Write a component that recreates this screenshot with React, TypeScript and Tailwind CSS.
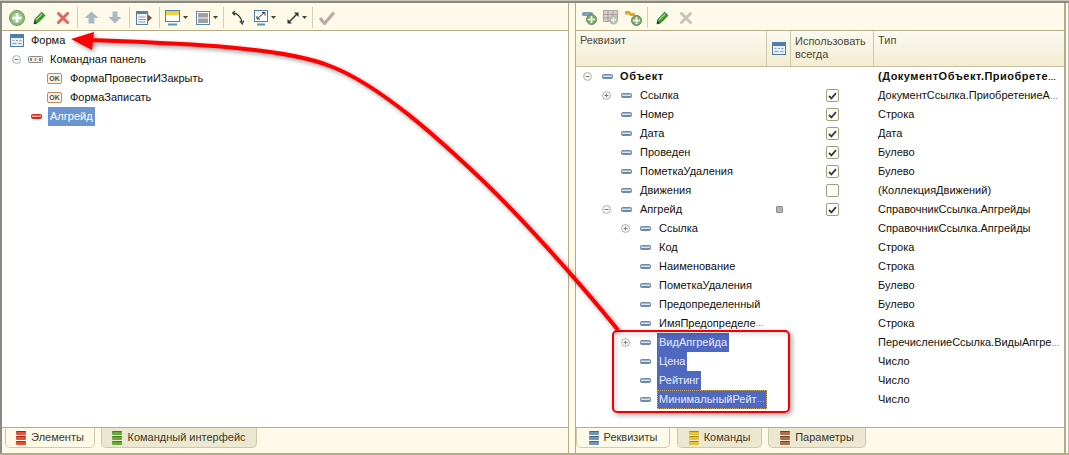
import type { ReactNode } from "react";

const font = "font-['Liberation_Sans',Arial,sans-serif]";

function Expander({ open }: { open: boolean }) {
  return (
    <svg width="9" height="9" viewBox="0 0 9 9" className="shrink-0">
      <circle cx="4.5" cy="4.5" r="3.9" fill="#fff" stroke="#a9a9a9" />
      <path d="M2.5 4.5h4" stroke="#777" />
      {!open && <path d="M4.5 2.5v4" stroke="#777" />}
    </svg>
  );
}

function FieldIcon({ red }: { red?: boolean }) {
  return (
    <svg width="11" height="5" viewBox="0 0 11 5" className="shrink-0">
      <rect x="0" y="0" width="11" height="5" rx="2" fill={red ? "#d8261c" : "#6d8aa8"} />
      <rect x="1" y="1.5" width="9" height="1.5" fill={red ? "#f8b0a0" : "#d7e2ec"} />
    </svg>
  );
}

function OkIcon() {
  return (
    <span className="flex h-[11px] w-[15px] shrink-0 items-center justify-center rounded-[2px] border border-[#c68a5a] bg-[#fdf3e2] text-[7px] leading-none font-bold text-[#5b4a3c]">
      OK
    </span>
  );
}

function FormIcon() {
  return (
    <svg width="14" height="13" viewBox="0 0 14 13" className="shrink-0">
      <rect x="0.5" y="0.5" width="13" height="12" fill="#e8eef4" stroke="#4f7ea6" />
      <rect x="1" y="1" width="12" height="3" fill="#4f7ea6" />
      <path d="M2.5 6.5h2M6 6.5h2M9.5 6.5h2M2.5 9.5h4M8 9.5h3.5" stroke="#8aa0b4" />
    </svg>
  );
}

function Check({ on }: { on: boolean }) {
  return (
    <span className="flex h-[13px] w-[13px] items-center justify-center rounded-[2px] border border-[#a69d78] bg-white">
      {on && (
        <svg width="9" height="8" viewBox="0 0 9 8">
          <path d="M1 4l2.4 2.4L8 1.2" fill="none" stroke="#3a3a3a" strokeWidth="1.8" />
        </svg>
      )}
    </span>
  );
}

function Caret() {
  return (
    <svg width="5" height="3" viewBox="0 0 5 3" className="ml-[3px] shrink-0">
      <path d="M0 0h5L2.5 3z" fill="#4a4320" />
    </svg>
  );
}

function Sep({ className }: { className: string }) {
  return <span className={`h-[21px] w-px shrink-0 bg-[#d6cfae] ${className}`} />;
}

function Pencil({ className }: { className: string }) {
  return (
    <svg width="13" height="14" viewBox="0 0 13 14" className={`shrink-0 ${className}`}>
      <path d="M1 13l.8-4.5L8.6 1.2 12 4.4 5 11.6z" fill="#3f9a2e" stroke="#1f6b1a" strokeWidth="0.8" />
      <path d="M3 9l6-6" stroke="#9fdc80" strokeWidth="1.2" />
      <path d="M1 13l.6-3 2.2 2.2z" fill="#16380f" />
    </svg>
  );
}

function Cross({ color, className }: { color: string; className: string }) {
  return (
    <svg width="12" height="12" viewBox="0 0 12 12" className={`shrink-0 ${className}`}>
      <path d="M1.5 1.5l9 9M10.5 1.5l-9 9" stroke={color} strokeWidth="3" strokeLinecap="round" />
    </svg>
  );
}

function PlusBadge({ cx, cy, r }: { cx: number; cy: number; r: number }) {
  return (
    <>
      <circle cx={cx} cy={cy} r={r} fill="#7fae6c" stroke="#5e8a4d" />
      <path d={`M${cx - r + 1.5} ${cy}h${2 * r - 3}M${cx} ${cy - r + 1.5}v${2 * r - 3}`} stroke="#fff" strokeWidth="1.6" />
    </>
  );
}

// the reference's ellipsis is narrower than the font's own glyph
function Clipped({ text }: { text: string }) {
  if (!text.endsWith("…")) return <>{text}</>;
  return (
    <>
      {text.slice(0, -1)}
      <span className="text-[8px]">…</span>
    </>
  );
}

function LeftToolbar() {
  return (
    <div className="flex h-[28px] shrink-0 items-center border-b border-[#b5ab84] pt-[2px] pl-[7px]">
      <svg width="16" height="16" viewBox="0 0 16 16" className="shrink-0">
        <circle cx="8" cy="8" r="7.5" fill="#8dbb78" stroke="#6c9a5c" />
        <circle cx="8" cy="8" r="5" fill="#a9d296" />
        <path d="M3.5 8h9M8 3.5v9" stroke="#fff" strokeWidth="2.6" />
      </svg>
      <Pencil className="ml-[8px]" />
      <Cross color="#e0655c" className="ml-[11px]" />
      <Sep className="ml-[8px]" />
      <svg width="15" height="13" viewBox="0 0 15 13" className="ml-[6px] shrink-0">
        <path d="M7.5 0.5L14.5 7h-4v5.5h-6V7h-4z" fill="#a9b8c2" />
      </svg>
      <svg width="14" height="13" viewBox="0 0 14 13" className="ml-[9px] shrink-0">
        <path d="M7 12.5L0.5 6h4V0.5h5V6h4z" fill="#a9b8c2" />
      </svg>
      <Sep className="ml-[7px]" />
      <svg width="16" height="14" viewBox="0 0 16 14" className="ml-[6px] shrink-0">
        <rect x="0.5" y="0.5" width="11" height="13" fill="#eef2f6" stroke="#5b7f9c" />
        <rect x="1" y="1" width="10" height="2" fill="#5b7f9c" />
        <path d="M2.5 6h7M2.5 8.5h7M2.5 11h7" stroke="#93a5b5" />
        <path d="M12 3.5l4 3.5-4 3.5z" fill="#7a5230" />
      </svg>
      <Sep className="ml-[7px]" />
      <svg width="15" height="16" viewBox="0 0 15 16" className="ml-[5px] shrink-0">
        <rect x="0.5" y="0.5" width="14" height="11" fill="#fff" stroke="#4f7ea6" />
        <rect x="1" y="1" width="13" height="4" fill="#f6cf3a" />
        <path d="M3 14.5h9" stroke="#4f9ac0" strokeWidth="2" />
      </svg>
      <Caret />
      <svg width="14" height="14" viewBox="0 0 14 14" className="ml-[8px] shrink-0">
        <rect x="0.5" y="0.5" width="13" height="13" fill="#fff" stroke="#5b8aa8" />
        <rect x="2" y="2" width="10" height="4.5" fill="#a0a0a0" />
        <rect x="2" y="7.5" width="10" height="4.5" fill="#a0a0a0" />
      </svg>
      <Caret />
      <Sep className="ml-[5px]" />
      <svg width="12" height="14" viewBox="0 0 12 14" className="ml-[8px] shrink-0">
        <path d="M1 2c4 0 8 4 9 9" fill="none" stroke="#333" strokeWidth="1.4" />
        <path d="M3 0L0.5 2 3 4.2M7.8 10l2.4 3 1.6-3.4" fill="none" stroke="#333" strokeWidth="1.2" />
      </svg>
      <svg width="14" height="16" viewBox="0 0 14 16" className="ml-[10px] shrink-0">
        <rect x="0.5" y="0.5" width="13" height="11" fill="#fff" stroke="#4f7ea6" />
        <path d="M3.5 8.5l7-6M3 6v3h3M8 2.5h3v3" fill="none" stroke="#333" />
        <path d="M3 14.5h8" stroke="#4f9ac0" strokeWidth="2" />
      </svg>
      <Caret />
      <svg width="12" height="12" viewBox="0 0 12 12" className="ml-[11px] shrink-0">
        <path d="M1.5 10.5l9-9" stroke="#333" strokeWidth="1.4" />
        <path d="M0.5 7v4.500h4.500zM11.500 5V0.500H7z" fill="#333" />
      </svg>
      <Caret />
      <Sep className="ml-[5px]" />
      <svg width="16" height="14" viewBox="0 0 16 14" className="ml-[6px] shrink-0">
        <path d="M1 7l4.500 5.500L15 1.500" fill="none" stroke="#bda9a6" strokeWidth="3.2" />
      </svg>
    </div>
  );
}

function RightToolbar() {
  return (
    <div className="flex h-[28px] shrink-0 items-center border-b border-[#b5ab84] pt-[2px] pl-[6px]">
      <svg width="15" height="14" viewBox="0 0 15 14" className="shrink-0">
        <rect x="0" y="1" width="11" height="4" rx="1.5" fill="#7f9db8" />
        <PlusBadge cx={9.5} cy={8.5} r={5} />
      </svg>
      <svg width="16" height="15" viewBox="0 0 16 15" className="ml-[6px] shrink-0">
        <rect x="0.5" y="0.5" width="14" height="11" fill="#d3cfc8" stroke="#aaa" />
        <path d="M5 1v10M10 1v10M1 4.500h13M1 8h13" stroke="#b09a9a" />
        <circle cx="10.500" cy="10" r="4.500" fill="#b4c0aa" />
        <path d="M8 10h5M10.500 7.500v5" stroke="#eef" strokeWidth="1.400" />
      </svg>
      <svg width="17" height="16" viewBox="0 0 17 16" className="ml-[6px] shrink-0">
        <path d="M0 1h5l1 2h4v3H5L4 4.500H0z" fill="#e4a521" />
        <PlusBadge cx={11.5} cy={10.5} r={5} />
      </svg>
      <Sep className="ml-[5px]" />
      <Pencil className="ml-[8px]" />
      <Cross color="#c9c5b8" className="ml-[11px]" />
    </div>
  );
}

type LeftRow = { label: string; pad: string; icon: ReactNode; gap: string; selected?: boolean; exp?: boolean };

const leftRows: LeftRow[] = [
  { label: "Форма", pad: "pl-[8px]", icon: <FormIcon />, gap: "ml-[7px]" },
  { label: "Командная панель", pad: "pl-[10px]", exp: true, gap: "ml-[7px]", icon: (
    <svg width="15" height="7" viewBox="0 0 15 7" className="ml-[7px] shrink-0">
      <rect x="0.500" y="0.500" width="14" height="6" rx="1" fill="#f2efe2" stroke="#8a8a8a" />
      <path d="M2 2h2v3H2z" fill="#7a8aa0" />
      <path d="M6.500 2h2v3h-2z" fill="#d09a5a" />
      <path d="M11 2h2v3h-2z" fill="#7a8aa0" />
    </svg>
  ) },
  { label: "ФормаПровестиИЗакрыть", pad: "pl-[45px]", icon: <OkIcon />, gap: "ml-[8px]" },
  { label: "ФормаЗаписать", pad: "pl-[45px]", icon: <OkIcon />, gap: "ml-[8px]" },
  { label: "Алгрейд", pad: "pl-[29px]", icon: <FieldIcon red />, gap: "ml-[6px]", selected: true },
];

function LeftPanel() {
  return (
    <div className="flex min-h-0 flex-1 flex-col">
      <div className="min-h-0 flex-1 bg-white">
        {leftRows.map((r) => (
          <div key={r.label} className={`flex h-[19px] items-center ${r.pad}`}>
            {r.exp && <Expander open />}
            {r.icon}
            <span
              className={`${r.gap} flex h-[19px] items-center ${r.selected ? "bg-[#6b94d0] px-[2px] text-white" : "text-[#14100a]"}`}
            >
              {r.label}
            </span>
          </div>
        ))}
      </div>
    </div>
  );
}

type PropRow = {
  label: string;
  type: string;
  level: 0 | 1 | 2;
  exp?: "open" | "closed";
  check?: boolean;
  sel?: boolean;
  focus?: boolean;
  mark?: boolean;
  bold?: boolean;
};

const propRows: PropRow[] = [
  { label: "Объект", type: "(ДокументОбъект.Приобрете…", level: 0, exp: "open", bold: true },
  { label: "Ссылка", type: "ДокументСсылка.ПриобретениеА…", level: 1, exp: "closed", check: true },
  { label: "Номер", type: "Строка", level: 1, check: true },
  { label: "Дата", type: "Дата", level: 1, check: true },
  { label: "Проведен", type: "Булево", level: 1, check: true },
  { label: "ПометкаУдаления", type: "Булево", level: 1, check: true },
  { label: "Движения", type: "(КоллекцияДвижений)", level: 1, check: false },
  { label: "Апгрейд", type: "СправочникСсылка.Апгрейды", level: 1, exp: "open", check: true, mark: true },
  { label: "Ссылка", type: "СправочникСсылка.Апгрейды", level: 2, exp: "closed" },
  { label: "Код", type: "Строка", level: 2 },
  { label: "Наименование", type: "Строка", level: 2 },
  { label: "ПометкаУдаления", type: "Булево", level: 2 },
  { label: "Предопределенный", type: "Булево", level: 2 },
  { label: "ИмяПредопределе…", type: "Строка", level: 2 },
  { label: "ВидАпгрейда", type: "ПеречислениеСсылка.ВидыАпгре…", level: 2, exp: "closed", sel: true },
  { label: "Цена", type: "Число", level: 2, sel: true },
  { label: "Рейтинг", type: "Число", level: 2, sel: true },
  { label: "МинимальныйРейт…", type: "Число", level: 2, sel: true, focus: true },
];

const levelPad = { 0: "pl-[7px]", 1: "pl-[26px]", 2: "pl-[45px]" };

function PropTable() {
  return (
    <div className="min-h-0 flex-1 bg-white">
      {propRows.map((r, i) => (
        <div key={i} className="flex h-[19px] items-center">
          <div className={`flex w-[191px] shrink-0 items-center ${levelPad[r.level]}`}>
            <span className="flex w-[19px] shrink-0 items-center">{r.exp && <Expander open={r.exp === "open"} />}</span>
            <FieldIcon />
            <span
              className={`flex h-[19px] items-center whitespace-nowrap ${r.bold ? "ml-[7px] font-bold tracking-[0.6px]" : ""} ${
                r.sel ? "ml-[6px] bg-[#5068c0] px-[2px] text-[#e6ecfa]" : "text-[#14100a]"
              } ${!r.bold && !r.sel ? "ml-[8px]" : ""} ${r.focus ? "outline-1 -outline-offset-1 outline-[#c0a860] outline-dotted" : ""}`}
            >
              <Clipped text={r.label} />
            </span>
          </div>
          <div className="flex w-[24px] shrink-0 justify-center">
            {r.mark && <span className="h-[7px] w-[7px] rounded-[1px] border border-[#8d8d8d] bg-[#b4b4b4]" />}
          </div>
          <div className="flex w-[83px] shrink-0 justify-center">{r.check !== undefined && <Check on={r.check} />}</div>
          <span className={`pl-[4px] whitespace-nowrap text-[#14100a] ${r.bold ? "font-bold tracking-[0.5px]" : ""}`}>
            <Clipped text={r.type} />
          </span>
        </div>
      ))}
    </div>
  );
}

function Tab({ label, active, colors, width, className }: { label: string; active?: boolean; colors: [string, string]; width: string; className?: string }) {
  return (
    <div
      className={`flex h-[20px] items-center justify-center gap-[5px] rounded-b-[5px] border-x border-b ${width} ${className ?? ""} ${
        active ? "border-x-[#cfc8a4] border-b-[#e3c98a] bg-[#fdfaea]" : "border-[#cfc8a4] bg-[#ece7d1]"
      }`}
    >
      <span className="flex w-[10px] flex-col gap-px">
        {[0, 1, 2].map((n) => (
          <span key={n} className="h-[4px] rounded-[1px] border-t" style={{ backgroundColor: colors[0], borderColor: colors[1] }} />
        ))}
      </span>
      <span className="text-[#3d3824]">{label}</span>
    </div>
  );
}

export default function App() {
  return (
    <div className={`${font} relative flex h-[455px] w-[1069px] flex-col overflow-hidden bg-[#fdfaea] text-[11px] leading-none`}>
      <div className="h-[3px] shrink-0 border-b-2 border-[#8a8a84] bg-[#c9c6b8]" />
      <div className="flex min-h-0 flex-1 border-l-2 border-[#8a8a84]">
        <div className="flex w-[567px] shrink-0 flex-col border-r border-[#b5ab84]">
          <LeftToolbar />
          <LeftPanel />
          <div className="h-px bg-[#b5ab84]" />
          <div className="flex h-[25px] pl-[3px]">
            <Tab label="Элементы" active colors={["#e2543a", "#a82818"]} width="w-[90px]" />
            <Tab label="Командный интерфейс" colors={["#6aa83a", "#3d7a20"]} width="w-[156px]" className="ml-[6px]" />
          </div>
        </div>
        <div className="ml-[6px] flex min-w-0 flex-1 flex-col border-x border-x-[#b5ab84] border-r-2">
          <RightToolbar />
          <div className="flex h-[36px] shrink-0 border-b border-[#c9c2a0] bg-gradient-to-b from-[#fbfaf2] to-[#f3ecd0] text-[#4f4a33]">
            <div className="w-[191px] shrink-0 border-r border-[#cfc8a4] px-[4px] pt-[4px]">Реквизит</div>
            <div className="flex w-[24px] shrink-0 items-center justify-center border-r border-[#cfc8a4]">
              <FormIcon />
            </div>
            <div className="w-[83px] shrink-0 border-r border-[#cfc8a4] pt-[4px] pl-[4px] leading-[13px]">
              Использовать
              <br />
              всегда
            </div>
            <div className="px-[4px] pt-[4px]">Тип</div>
          </div>
          <PropTable />
          <div className="h-px bg-[#b5ab84]" />
          <div className="flex h-[25px]">
            <Tab label="Реквизиты" active colors={["#6f95b8", "#3f6a90"]} width="w-[94px]" />
            <Tab label="Команды" colors={["#e4c23a", "#b08a18"]} width="w-[85px]" className="ml-[7px]" />
            <Tab label="Параметры" colors={["#a8734a", "#6f4526"]} width="w-[98px]" className="ml-[6px]" />
          </div>
        </div>
        <div className="w-[3px] shrink-0 border-r border-[#b9b9b0] bg-white" />
      </div>
      <div className="h-[2px] shrink-0 bg-[#b5ab84]" />

      {/* callout over the screenshot */}
      <div className="pointer-events-none absolute top-[330px] left-[612px] h-[83px] w-[178px] rounded-[5px] border-2 border-[#f00000] shadow-[2px_2px_5px_rgba(0,0,0,0.35),inset_2px_2px_5px_rgba(0,0,0,0.15)]" />
      <svg width="1069" height="455" viewBox="0 0 1069 455" className="pointer-events-none absolute top-0 left-0 drop-shadow-[2px_2px_2px_rgba(0,0,0,0.4)]">
        <path d="M90 40C170 43 280 46 330 66C380 85 440 140 480 178C520 216 575 277 618 330" fill="none" stroke="#ff0000" strokeWidth="4" />
        <path d="M71 39L94 32L92 50z" fill="#ff0000" />
      </svg>
    </div>
  );
}
